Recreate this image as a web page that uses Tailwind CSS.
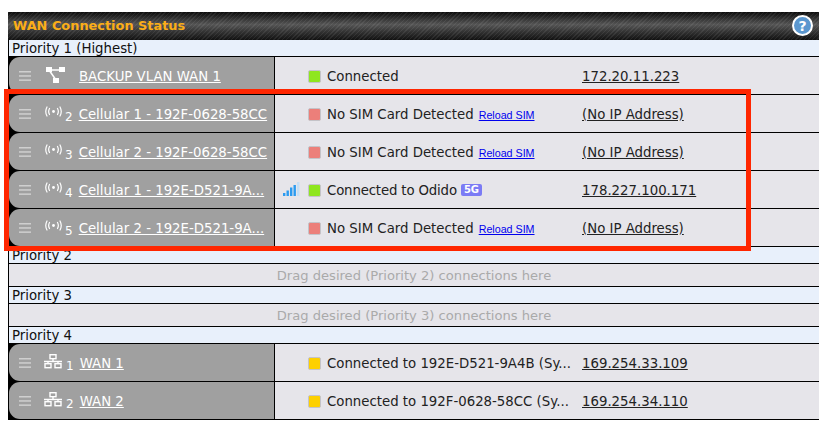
<!DOCTYPE html>
<html lang="en">
<head>
<meta charset="utf-8"/>
<title>WAN Connection Status</title>
<script src="https://cdn.jsdelivr.net/npm/@tailwindcss/browser@4"></script>
</head>
<body class="bg-white font-['DejaVu_Sans',sans-serif] text-[13.3px] text-[#222]">
<div class="relative w-[824px] h-[421px] overflow-hidden pt-3 pl-2">
  <!-- panel -->
  <div class="w-[811px] border-l border-b border-black">
    <!-- title bar -->
    <div class="h-7 -ml-px flex items-center justify-between pl-[5px] pr-[5px] bg-[repeating-linear-gradient(135deg,rgba(255,255,255,0.07)_0px,rgba(255,255,255,0.07)_1px,transparent_1px,transparent_3px),linear-gradient(to_bottom,#0c0c0c,#555_45%,#333_70%,#111)]">
      <span class="font-bold text-[#fbae17] text-[12.9px]">WAN Connection Status</span>
      <svg width="21" height="21" viewBox="0 0 21 21" class="mb-[2px] mr-px">
        <circle cx="10.5" cy="10.5" r="9.5" fill="#5b97cf" stroke="#fff" stroke-width="2"/>
        <text x="10.5" y="15.5" text-anchor="middle" font-family="DejaVu Sans" font-weight="bold" font-size="14" fill="#fff">?</text>
      </svg>
    </div>

    <div class="h-[17px] bg-[#e8f0fb] border-b border-black pl-[3px] leading-[17px] text-[#111]">Priority 1 (Highest)</div>

    <!-- backup vlan -->
    <div class="h-[38px] flex border-b border-black bg-black">
      <div class="w-[265px] shrink-0 bg-[#a0a0a0] rounded-l-[11px] flex items-center pl-[10px] text-white">
        <svg width="12" height="10" viewBox="0 0 12 10"><g fill="#cfcfcf"><rect y="0" width="12" height="1.5"/><rect y="4.2" width="12" height="1.5"/><rect y="8.4" width="12" height="1.5"/></g></svg>
        <svg width="20" height="18" viewBox="0 0 20 18" class="ml-[15px]"><path d="M3 3H16M3 3L10 13" stroke="#fff" stroke-width="1.5" fill="none"/><rect x="0" y="0" width="6" height="5" fill="#fff"/><rect x="13" y="0" width="6" height="5" fill="#fff"/><rect x="7" y="11" width="6" height="5" fill="#fff"/></svg>
        <a class="underline ml-[13px] mt-[2px]">BACKUP VLAN WAN 1</a>
      </div>
      <div class="w-px bg-black"></div>
      <div class="flex-1 bg-[#e6e5ea] flex items-center pt-px">
        <span class="w-[13px] h-[13px] ml-[33px] rounded-[2px] bg-[#8fe61f] border border-[#c4c3c8]"></span>
        <span class="ml-[6px] mt-[2px]">Connected</span>
        <a class="underline ml-auto w-[237px] mt-[2px]">172.20.11.223</a>
      </div>
    </div>

    <!-- cellular 1 -->
    <div class="h-[38px] flex border-b border-black bg-black">
      <div class="w-[265px] shrink-0 bg-[#a0a0a0] rounded-l-[11px] flex items-center pl-[10px] text-white">
        <svg width="12" height="10" viewBox="0 0 12 10"><g fill="#cfcfcf"><rect y="0" width="12" height="1.5"/><rect y="4.2" width="12" height="1.5"/><rect y="8.4" width="12" height="1.5"/></g></svg>
        <svg width="17" height="11" viewBox="0 0 17 11" class="ml-[14px] mb-[5px]"><g stroke="#fff" stroke-width="1.2" fill="none" stroke-linecap="round"><path d="M4.5 2.5Q2.8 5.5 4.5 8.5M2 1Q-0.5 5.5 2 10M12.5 2.5Q14.2 5.5 12.5 8.5M15 1Q17.5 5.5 15 10"/></g><circle cx="8.5" cy="5.5" r="1.4" fill="#fff"/></svg>
        <span class="ml-[3px] mt-[7px] text-[12px]">2</span>
        <a class="underline ml-[6px] mt-[2px] whitespace-nowrap">Cellular 1 - 192F-0628-58CC</a>
      </div>
      <div class="w-px bg-black"></div>
      <div class="flex-1 bg-[#e6e5ea] flex items-center pt-px">
        <span class="w-[13px] h-[13px] ml-[33px] rounded-[2px] bg-[#ec7f7a] border border-[#c4c3c8]"></span>
        <span class="ml-[6px] mt-[2px]">No SIM Card Detected</span>
        <a class="underline text-[#0000ee] text-[10.7px] ml-[5px] font-['Liberation_Sans',sans-serif] mt-[3px]">Reload SIM</a>
        <a class="underline ml-auto w-[237px] mt-[2px]">(No IP Address)</a>
      </div>
    </div>

    <!-- cellular 2 -->
    <div class="h-[38px] flex border-b border-black bg-black">
      <div class="w-[265px] shrink-0 bg-[#a0a0a0] rounded-l-[11px] flex items-center pl-[10px] text-white">
        <svg width="12" height="10" viewBox="0 0 12 10"><g fill="#cfcfcf"><rect y="0" width="12" height="1.5"/><rect y="4.2" width="12" height="1.5"/><rect y="8.4" width="12" height="1.5"/></g></svg>
        <svg width="17" height="11" viewBox="0 0 17 11" class="ml-[14px] mb-[5px]"><g stroke="#fff" stroke-width="1.2" fill="none" stroke-linecap="round"><path d="M4.5 2.5Q2.8 5.5 4.5 8.5M2 1Q-0.5 5.5 2 10M12.5 2.5Q14.2 5.5 12.5 8.5M15 1Q17.5 5.5 15 10"/></g><circle cx="8.5" cy="5.5" r="1.4" fill="#fff"/></svg>
        <span class="ml-[3px] mt-[7px] text-[12px]">3</span>
        <a class="underline ml-[6px] mt-[2px] whitespace-nowrap">Cellular 2 - 192F-0628-58CC</a>
      </div>
      <div class="w-px bg-black"></div>
      <div class="flex-1 bg-[#e6e5ea] flex items-center pt-px">
        <span class="w-[13px] h-[13px] ml-[33px] rounded-[2px] bg-[#ec7f7a] border border-[#c4c3c8]"></span>
        <span class="ml-[6px] mt-[2px]">No SIM Card Detected</span>
        <a class="underline text-[#0000ee] text-[10.7px] ml-[5px] font-['Liberation_Sans',sans-serif] mt-[3px]">Reload SIM</a>
        <a class="underline ml-auto w-[237px] mt-[2px]">(No IP Address)</a>
      </div>
    </div>

    <!-- cellular 3 -->
    <div class="h-[38px] flex border-b border-black bg-black">
      <div class="w-[265px] shrink-0 bg-[#a0a0a0] rounded-l-[11px] flex items-center pl-[10px] text-white">
        <svg width="12" height="10" viewBox="0 0 12 10"><g fill="#cfcfcf"><rect y="0" width="12" height="1.5"/><rect y="4.2" width="12" height="1.5"/><rect y="8.4" width="12" height="1.5"/></g></svg>
        <svg width="17" height="11" viewBox="0 0 17 11" class="ml-[14px] mb-[5px]"><g stroke="#fff" stroke-width="1.2" fill="none" stroke-linecap="round"><path d="M4.5 2.5Q2.8 5.5 4.5 8.5M2 1Q-0.5 5.5 2 10M12.5 2.5Q14.2 5.5 12.5 8.5M15 1Q17.5 5.5 15 10"/></g><circle cx="8.5" cy="5.5" r="1.4" fill="#fff"/></svg>
        <span class="ml-[3px] mt-[7px] text-[12px]">4</span>
        <a class="underline ml-[6px] mt-[2px] whitespace-nowrap">Cellular 1 - 192E-D521-9A...</a>
      </div>
      <div class="w-px bg-black"></div>
      <div class="flex-1 bg-[#e6e5ea] flex items-center pt-px">
        <svg width="17" height="15" viewBox="0 0 17 15" class="ml-2 mb-[2px]"><g fill="#2b9bf0"><rect x="0" y="11" width="2.4" height="3"/><rect x="3.5" y="8.5" width="2.4" height="5.5"/><rect x="7" y="5.5" width="2.4" height="8.5"/><rect x="10.5" y="3" width="2.4" height="11"/></g><rect x="14" y="0" width="2.4" height="14" fill="#c4dff5"/></svg>
        <span class="w-[13px] h-[13px] ml-2 rounded-[2px] bg-[#8fe61f] border border-[#c4c3c8]"></span>
        <span class="ml-[6px] mt-[2px] w-[134px] whitespace-nowrap tracking-[-0.15px]">Connected to Odido</span>
        <span class="h-[12px] w-[21px] rounded-[2px] bg-[#7b7bf5] text-white font-bold text-[10px] leading-[12px] text-center">5G</span>
        <a class="underline ml-auto w-[237px] mt-[2px]">178.227.100.171</a>
      </div>
    </div>

    <!-- cellular 4 -->
    <div class="h-[38px] flex border-b border-black bg-black">
      <div class="w-[265px] shrink-0 bg-[#a0a0a0] rounded-l-[11px] flex items-center pl-[10px] text-white">
        <svg width="12" height="10" viewBox="0 0 12 10"><g fill="#cfcfcf"><rect y="0" width="12" height="1.5"/><rect y="4.2" width="12" height="1.5"/><rect y="8.4" width="12" height="1.5"/></g></svg>
        <svg width="17" height="11" viewBox="0 0 17 11" class="ml-[14px] mb-[5px]"><g stroke="#fff" stroke-width="1.2" fill="none" stroke-linecap="round"><path d="M4.5 2.5Q2.8 5.5 4.5 8.5M2 1Q-0.5 5.5 2 10M12.5 2.5Q14.2 5.5 12.5 8.5M15 1Q17.5 5.5 15 10"/></g><circle cx="8.5" cy="5.5" r="1.4" fill="#fff"/></svg>
        <span class="ml-[3px] mt-[7px] text-[12px]">5</span>
        <a class="underline ml-[6px] mt-[2px] whitespace-nowrap">Cellular 2 - 192E-D521-9A...</a>
      </div>
      <div class="w-px bg-black"></div>
      <div class="flex-1 bg-[#e6e5ea] flex items-center pt-px">
        <span class="w-[13px] h-[13px] ml-[33px] rounded-[2px] bg-[#ec7f7a] border border-[#c4c3c8]"></span>
        <span class="ml-[6px] mt-[2px]">No SIM Card Detected</span>
        <a class="underline text-[#0000ee] text-[10.7px] ml-[5px] font-['Liberation_Sans',sans-serif] mt-[3px]">Reload SIM</a>
        <a class="underline ml-auto w-[237px] mt-[2px]">(No IP Address)</a>
      </div>
    </div>

    <div class="h-[17px] bg-[#e8f0fb] border-b border-black pl-[3px] leading-[17px] text-[#111]">Priority 2</div>
    <div class="h-[23px] bg-[#e6e5ea] border-b border-black text-center leading-[23px] text-[13.1px] text-[#aaa]">Drag desired (Priority 2) connections here</div>
    <div class="h-[17px] bg-[#e8f0fb] border-b border-black pl-[3px] leading-[17px] text-[#111]">Priority 3</div>
    <div class="h-[23px] bg-[#e6e5ea] border-b border-black text-center leading-[23px] text-[13.1px] text-[#aaa]">Drag desired (Priority 3) connections here</div>
    <div class="h-[17px] bg-[#e8f0fb] border-b border-black pl-[3px] leading-[17px] text-[#111]">Priority 4</div>

    <!-- wan 1 -->
    <div class="h-[38px] flex border-b border-black bg-black">
      <div class="w-[265px] shrink-0 bg-[#a0a0a0] rounded-l-[11px] flex items-center pl-[10px] text-white">
        <svg width="12" height="10" viewBox="0 0 12 10"><g fill="#cfcfcf"><rect y="0" width="12" height="1.5"/><rect y="4.2" width="12" height="1.5"/><rect y="8.4" width="12" height="1.5"/></g></svg>
        <svg width="18" height="15" viewBox="0 0 18 15" class="ml-[13px] mb-[2px]"><g stroke="#fff" stroke-width="1.4" fill="none"><rect x="6" y="0.7" width="6" height="4"/><rect x="1" y="9.7" width="6" height="4"/><rect x="11" y="9.7" width="6" height="4"/><path d="M0 7.5H18M9 4.6V7.5M4 7.5V9.6M14 7.5V9.6"/></g></svg>
        <span class="ml-1 mt-[7px] text-[12px]">1</span>
        <a class="underline ml-[6px] mt-[2px]">WAN 1</a>
      </div>
      <div class="w-px bg-black"></div>
      <div class="flex-1 bg-[#e6e5ea] flex items-center pt-px">
        <span class="w-[13px] h-[13px] ml-[33px] rounded-[2px] bg-[#fdd000] border border-[#c4c3c8]"></span>
        <span class="ml-[6px] mt-[2px] whitespace-nowrap">Connected to 192E-D521-9A4B (Sy...</span>
        <a class="underline ml-auto w-[237px] mt-[2px]">169.254.33.109</a>
      </div>
    </div>

    <!-- wan 2 -->
    <div class="h-[37px] flex bg-black">
      <div class="w-[265px] shrink-0 bg-[#a0a0a0] rounded-l-[11px] flex items-center pl-[10px] text-white">
        <svg width="12" height="10" viewBox="0 0 12 10"><g fill="#cfcfcf"><rect y="0" width="12" height="1.5"/><rect y="4.2" width="12" height="1.5"/><rect y="8.4" width="12" height="1.5"/></g></svg>
        <svg width="18" height="15" viewBox="0 0 18 15" class="ml-[13px] mb-[2px]"><g stroke="#fff" stroke-width="1.4" fill="none"><rect x="6" y="0.7" width="6" height="4"/><rect x="1" y="9.7" width="6" height="4"/><rect x="11" y="9.7" width="6" height="4"/><path d="M0 7.5H18M9 4.6V7.5M4 7.5V9.6M14 7.5V9.6"/></g></svg>
        <span class="ml-1 mt-[7px] text-[12px]">2</span>
        <a class="underline ml-[6px] mt-[2px]">WAN 2</a>
      </div>
      <div class="w-px bg-black"></div>
      <div class="flex-1 bg-[#e6e5ea] flex items-center pt-px">
        <span class="w-[13px] h-[13px] ml-[33px] rounded-[2px] bg-[#fdd000] border border-[#c4c3c8]"></span>
        <span class="ml-[6px] mt-[2px] whitespace-nowrap">Connected to 192F-0628-58CC (Sy...</span>
        <a class="underline ml-auto w-[237px] mt-[2px]">169.254.34.110</a>
      </div>
    </div>
  </div>

  <!-- red highlight drawn over the cellular rows -->
  <div class="absolute left-1 top-[89px] w-[747px] h-[162px] border-[5px] border-[#ff2600]"></div>
</div>
</body>
</html>
